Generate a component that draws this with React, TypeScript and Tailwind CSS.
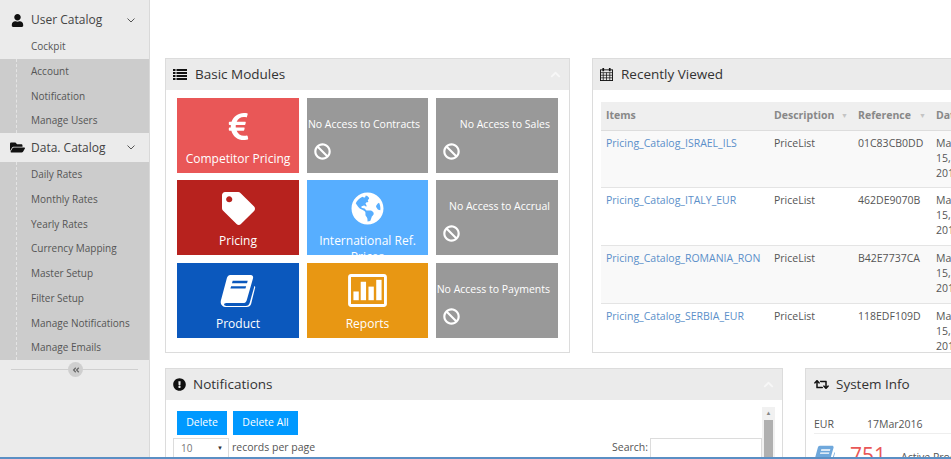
import React from "react";
import {
  FaAngleDoubleLeft,
  FaBan,
  FaChevronUp,
  FaEuroSign,
  FaExclamationCircle,
  FaFolderOpen,
  FaGlobeAmericas,
  FaRetweet,
  FaTag,
  FaUser,
} from "react-icons/fa";

const BookIcon = ({ className }: { className?: string }) => (
  <svg viewBox="0 0 36 34" className={className} fill="currentColor">
    <path
      fillRule="evenodd"
      d="M10 1h21c2 0 3 1.600 2.500 3.500L27 27c-.6 2-1.800 3-4 3H6c-1.700 0-2.500 1-2.300 1.800.2.800 1 1.200 2.300 1.200h20c2 0 3.400-1 4-3L35 12l.8 1.500L31.500 31c-.6 2-2.400 3-4.500 3H6c-3.500 0-6-2.300-5.800-5.500.1-1.200.4-2 .8-3.500L6.500 4.500C7 2.500 8.200 1 10 1zm2.500 6-.7 2.500h15.500l.7-2.500H12.500zm-1.600 5.500-.7 2.500h15.500l.7-2.500H10.900z"
    />
  </svg>
);

const ReportIcon = ({ className }: { className?: string }) => (
  <svg viewBox="0 0 40 34" className={className} fill="currentColor">
    <path
      fillRule="evenodd"
      d="M3 0h34c1.700 0 3 1.300 3 3v28c0 1.700-1.300 3-3 3H3c-1.700 0-3-1.300-3-3V3c0-1.700 1.300-3 3-3zm0 3v28h34V3H3z"
    />
    <rect x="5.500" y="18" width="5.500" height="9" />
    <rect x="13" y="8" width="5.500" height="19" />
    <rect x="21" y="13" width="5.500" height="14" />
    <rect x="29" y="6" width="5.500" height="21" />
  </svg>
);

const CalendarIcon = ({ className }: { className?: string }) => (
  <svg viewBox="0 0 14 14" className={className} fill="none" stroke="currentColor" strokeWidth="1">
    <rect x="0.500" y="2" width="13" height="11.500" />
    <path d="M0.500 5h13M0.500 7.800h13M0.500 10.600h13M3.500 5v8.500M7 5v8.500M10.500 5v8.500" strokeWidth="0.800" />
    <path d="M3.500 0v3.500M10.500 0v3.500" strokeWidth="1.800" />
  </svg>
);

const ListIcon = ({ className }: { className?: string }) => (
  <svg viewBox="0 0 14 11" className={className} fill="currentColor">
    <path d="M0 0h2.500v2H0zM3.500 0H14v2H3.500zM0 3h2.500v2H0zM3.500 3H14v2H3.500zM0 6h2.500v2H0zM3.500 6H14v2H3.500zM0 9h2.500v2H0zM3.500 9H14v2H3.500z" />
  </svg>
);

const userItems = ["Account", "Notification", "Manage Users"];
const dataItems = [
  "Daily Rates",
  "Monthly Rates",
  "Yearly Rates",
  "Currency Mapping",
  "Master Setup",
  "Filter Setup",
  "Manage Notifications",
  "Manage Emails",
];

const recent = [
  ["Pricing_Catalog_ISRAEL_ILS", "01C83CB0DD"],
  ["Pricing_Catalog_ITALY_EUR", "462DE9070B"],
  ["Pricing_Catalog_ROMANIA_RON", "B42E7737CA"],
  ["Pricing_Catalog_SERBIA_EUR", "118EDF109D"],
];

const SideHeader = ({ icon, label, h }: { icon: React.ReactNode; label: string; h: string }) => (
  <div className={`flex items-center bg-[#ebebeb] pl-[10px] pr-[14px] text-[12px] text-[#444] ${h}`}>
    <span className="flex w-[21px] text-[13px] text-[#111]">{icon}</span>
    <span className="flex-1">{label}</span>
    <svg viewBox="0 0 8 5" className="h-[5px] w-[8px] text-[#555]" fill="none" stroke="currentColor" strokeWidth="1">
      <path d="M0.500 0.500 4 4l3.500-3.500" />
    </svg>
  </div>
);

const SideList = ({ items }: { items: string[] }) => (
  <ul className="border-l border-dashed border-[#e4e4e4] ml-[16px]">
    {items.map((item) => (
      <li key={item} className="flex h-[24.75px] items-center pl-[14px] text-[10px] text-[#555]">
        {item}
      </li>
    ))}
  </ul>
);

const Sidebar = () => (
  <aside className="w-[150px] shrink-0 pt-[7px] bg-[#ebebeb] border-r border-[#d9d9d9]">
    <SideHeader icon={<FaUser className="ml-px" />} label="User Catalog" h="h-[26px]" />
    <div className="flex h-[26px] items-center bg-[#ebebeb] pl-[31px] text-[10px] text-[#555]">Cockpit</div>
    <div className="bg-[#cccccc]">
      <SideList items={userItems} />
    </div>
    <SideHeader icon={<FaFolderOpen className="text-[15px]" />} label="Data. Catalog" h="h-[29px]" />
    <div className="bg-[#cccccc]">
      <SideList items={dataItems} />
    </div>
    <div className="relative mt-[9px] mx-[11px] h-px bg-[#cfcfcf]">
      <span className="absolute left-[57px] top-[-7px] flex h-[15px] w-[15px] items-center justify-center rounded-full bg-[#cfcfcf] text-[8px] text-[#666]">
        <FaAngleDoubleLeft />
      </span>
    </div>
  </aside>
);

const PanelHeader = ({ icon, title, collapse, w = "w-[22px]" }: { icon: React.ReactNode; title: string; collapse?: boolean; w?: string }) => (
  <div className="flex h-[31px] shrink-0 items-center bg-[#ebebeb] pb-px pl-[7px] pr-[8px] text-[13.500px] text-[#333]">
    <span className={`flex text-[#111] ${w}`}>{icon}</span>
    <span className="flex-1">{title}</span>
    {collapse && <FaChevronUp className="text-[11px] text-[#f7f7f7]" />}
  </div>
);

const Tile = ({ color, icon, label }: { color: string; icon: React.ReactNode; label: string }) => (
  <div className={`flex h-[75px] flex-col items-center overflow-hidden text-white ${color}`}>
    <div className="flex h-[53px] shrink-0 items-center justify-center pt-[3px]">{icon}</div>
    <div className="px-1 text-center text-[12px] leading-[16px]">{label}</div>
  </div>
);

const NoAccess = ({ label }: { label: string }) => (
  <div className="flex h-[75px] flex-col overflow-hidden bg-[#999999] text-white">
    <div className="mt-[18px] pr-[8px] text-right text-[10.500px] leading-[16px] whitespace-nowrap">{label}</div>
    <FaBan className="mt-[11px] ml-[7px] text-[17px]" />
  </div>
);

const BasicModules = () => (
  <section className="w-[405px] h-[295px] shrink-0 border border-[#dcdcdc] bg-white">
    <PanelHeader icon={<ListIcon className="h-[11px] w-[14px]" />} title="Basic Modules" collapse />
    <div className="grid grid-cols-[122px_121px_122px] gap-x-[8px] gap-y-[7.250px] pl-[11px] pt-[8px]">
      <Tile color="bg-[#e95757]" icon={<FaEuroSign className="text-[31px]" />} label="Competitor Pricing" />
      <NoAccess label="No Access to Contracts" />
      <NoAccess label="No Access to Sales" />
      <Tile color="bg-[#b7221e]" icon={<FaTag className="text-[33px]" />} label="Pricing" />
      <Tile color="bg-[#57aeff]" icon={<FaGlobeAmericas className="text-[33px]" />} label="International Ref. Prices" />
      <NoAccess label="No Access to Accrual" />
      <Tile color="bg-[#0b58bd]" icon={<BookIcon className="h-[33px] w-[36px]" />} label="Product" />
      <Tile color="bg-[#e89713]" icon={<ReportIcon className="h-[33px] w-[41px]" />} label="Reports" />
      <NoAccess label="No Access to Payments" />
    </div>
  </section>
);

const HeadCell = ({ label, sort, w }: { label: string; sort?: boolean; w: string }) => (
  <th className={`${w} px-[5px] text-left text-[10.500px] font-bold text-[#888]`}>
    <span className="flex items-center justify-between whitespace-nowrap">
      {label}
      {sort && <span className="text-[7px] text-[#c4c4c4]">▼</span>}
    </span>
  </th>
);

const RecentlyViewed = () => (
  <section className="flex h-[295px] w-[400px] shrink-0 flex-col overflow-hidden border border-[#dcdcdc] bg-white">
    <PanelHeader icon={<CalendarIcon className="h-[13px] w-[13px]" />} title="Recently Viewed" w="w-[21px]" />
    <div className="pl-[8px] pt-[12px]">
      <table className="w-[380px] table-fixed border-collapse text-[10.500px] text-[#555]">
        <thead>
          <tr className="h-[28px] border-b border-[#ddd] bg-[#efefef]">
            <HeadCell label="Items" w="w-[168px]" />
            <HeadCell label="Description" sort w="w-[84px]" />
            <HeadCell label="Reference" sort w="w-[78px]" />
            <HeadCell label="Date" w="w-[50px]" />
          </tr>
        </thead>
        <tbody>
          {recent.map(([name, ref], i) => (
            <tr key={name} className={`h-[57.700px] border-b border-[#e4e4e4] align-top ${i % 2 === 0 ? "bg-[#f9f9f9]" : "bg-white"}`}>
              <td className="px-[5px] pt-[5px] leading-[15px] text-[#5b8fc9] whitespace-nowrap">{name}</td>
              <td className="px-[5px] pt-[5px] leading-[15px]">PriceList</td>
              <td className="px-[5px] pt-[5px] leading-[15px]">{ref}</td>
              <td className="px-[5px] pt-[5px] leading-[15px]">
                Mar
                <br />
                15,
                <br />
                2016
              </td>
            </tr>
          ))}
        </tbody>
      </table>
    </div>
  </section>
);

const Notifications = () => (
  <section className="flex h-[100px] w-[618px] shrink-0 flex-col border border-[#dcdcdc] bg-white">
    <PanelHeader icon={<FaExclamationCircle className="text-[13px]" />} title="Notifications" w="w-[20px]" collapse />
    <div className="flex pl-[7px] pr-[7px] pt-[7px]">
      <div className="flex-1 pt-[4px]">
        <div className="ml-[4px] flex gap-[6px]">
          <button className="h-[24px] w-[50px] bg-[#0099ff] text-[10.500px] text-white">Delete</button>
          <button className="h-[24px] w-[65px] bg-[#0099ff] text-[10.500px] text-white">Delete All</button>
        </div>
        <div className="mt-[3px] flex items-start text-[10.500px] text-[#555]">
          <div className="flex h-[20px] w-[56px] items-center justify-between border border-[#dcdcdc] pl-[7px] pr-[5px] text-[10px] text-[#777]">
            10
            <span className="text-[6px] text-[#333]">▼</span>
          </div>
          <span className="ml-[3px] pt-px leading-[16px]">records per page</span>
          <span className="ml-auto mr-[2px] pt-px leading-[16px]">Search:</span>
          <div className="h-[20px] w-[112px] border border-[#dcdcdc]" />
        </div>
      </div>
      <div className="flex h-[60px] w-[13px] flex-col items-center bg-[#f1f1f1]">
        <span className="flex h-[13px] items-center text-[6px] text-[#888]">▲</span>
        <div className="w-[9px] flex-1 bg-[#b0b0b0]" />
      </div>
    </div>
  </section>
);

const SystemInfo = () => (
  <section className="flex h-[100px] w-[200px] shrink-0 flex-col border border-[#dcdcdc] bg-white">
    <PanelHeader icon={<FaRetweet className="ml-px text-[15px]" />} title="System Info" w="w-[23px]" />
    <div className="px-[8px] pt-[16px]">
      <div className="flex border-b border-[#eee] pb-[1px] text-[10.500px] leading-[16px] text-[#555]">
        <span className="w-[53px]">EUR</span>
        <span>17Mar2016</span>
      </div>
      <div className="flex items-center pt-[9px]">
        <BookIcon className="h-[20px] w-[21px] text-[#6fa8dc]" />
        <span className="ml-[15px] text-[21px] leading-[24px] text-[#e95757]">751</span>
        <span className="ml-[15px] pt-[5px] text-[10.500px] whitespace-nowrap text-[#555]">Active Products</span>
      </div>
    </div>
  </section>
);

export default function App() {
  return (
    <div
      className="relative flex h-[459px] w-[951px] overflow-hidden bg-white"
      style={{ fontFamily: '"Open Sans", "Liberation Sans", sans-serif' }}
    >
      <Sidebar />
      <main className="min-w-0 flex-1 pl-[15px] pt-[58px]">
        <div className="flex gap-[22px]">
          <BasicModules />
          <RecentlyViewed />
        </div>
        <div className="mt-[15px] flex gap-[22px]">
          <Notifications />
          <SystemInfo />
        </div>
      </main>
      <div className="absolute inset-x-0 bottom-0 h-[2px] bg-[#5b8fc4]" />
    </div>
  );
}
